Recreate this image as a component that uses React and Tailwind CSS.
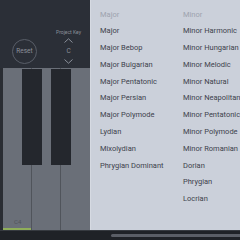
import React from 'react';

const majors = ['Major', 'Major Bebop', 'Major Bulgarian', 'Major Pentatonic', 'Major Persian', 'Major Polymode', 'Lydian', 'Mixolydian', 'Phrygian Dominant'];
const minors = ['Minor Harmonic', 'Minor Hungarian', 'Minor Melodic', 'Minor Natural', 'Minor Neapolitan', 'Minor Pentatonic', 'Minor Polymode', 'Minor Romanian', 'Dorian', 'Phrygian', 'Locrian'];

function ScaleColumn({ title, items }) {
    return (
        <div className="flex flex-col whitespace-nowrap">
            <div className="text-[#9da3ae]">{title}</div>
            {items.map((s) => (
                <div key={s} className="text-[#3d424c]">{s}</div>
            ))}
        </div>
    );
}

function App() {
    return (
        <div className="w-[240px] h-[240px] flex flex-col bg-[#1f2227] overflow-hidden" style={{ fontFamily: 'Roboto, "Liberation Sans", sans-serif' }}>
            <div className="flex h-[230px]">
                <div className="w-[90px] flex flex-col bg-[#2b2f37]">
                    <div className="h-[68px] flex items-start pl-[12px]">
                        <div className="mt-[39px] w-[25px] h-[25px] rounded-full border border-[#595e68] flex items-center justify-center text-[6.5px] text-[#8b909a]">
                            Reset
                        </div>
                        <div className="mt-[29px] ml-[19px] flex flex-col items-center text-[#8b909a]">
                            <div className="text-[5px] leading-[6px]">Project Key</div>
                            <svg className="mt-[3px]" width="9" height="5" viewBox="0 0 9 5"><path d="M0.5 4.5 L4.5 0.8 L8.5 4.5" stroke="#8b909a" strokeWidth="1" fill="none" /></svg>
                            <div className="text-[6.5px] leading-[6px] mt-[5px]">C</div>
                            <svg className="mt-[5px]" width="9" height="5" viewBox="0 0 9 5"><path d="M0.5 0.5 L4.5 4.2 L8.5 0.5" stroke="#8b909a" strokeWidth="1" fill="none" /></svg>
                        </div>
                    </div>
                    <div className="flex-1 relative pl-[3px] bg-[#2a2d33]">
                        <div className="flex h-full">
                            <div className="w-[29px] h-full bg-[#6a6f78] border-r border-[#50545b] relative">
                                <span className="absolute left-[11px] bottom-[4px] text-[6px] text-[#50545b]">C4</span>
                                <div className="absolute left-0 right-0 bottom-0 h-[2px] bg-[#8fae5a]" />
                            </div>
                            <div className="w-[29px] h-full bg-[#6a6f78] border-r border-[#50545b]" />
                            <div className="w-[29px] h-full bg-[#6a6f78]" />
                        </div>
                        <div className="absolute top-[1px] left-[22px] w-[20px] h-[96px] bg-[#24272d]" />
                        <div className="absolute top-[1px] left-[51px] w-[20px] h-[96px] bg-[#24272d]" />
                    </div>
                </div>
                <div className="flex-1 bg-[#cbd0da] border-l border-[#d6dae2] pl-[9px] pt-[6.5px] text-[7.5px] leading-[16.8px] flex">
                    <div className="w-[83px]">
                        <ScaleColumn title="Major" items={majors} />
                    </div>
                    <ScaleColumn title="Minor" items={minors} />
                </div>
            </div>
            <div className="flex-1 flex items-start pt-[3px] border-t border-[#363a40]">
                <div className="w-[111px]" />
                <div className="flex-1 h-[3px] bg-[#5a5e66] rounded-l-full" />
            </div>
        </div>
    );
}

export default App;
